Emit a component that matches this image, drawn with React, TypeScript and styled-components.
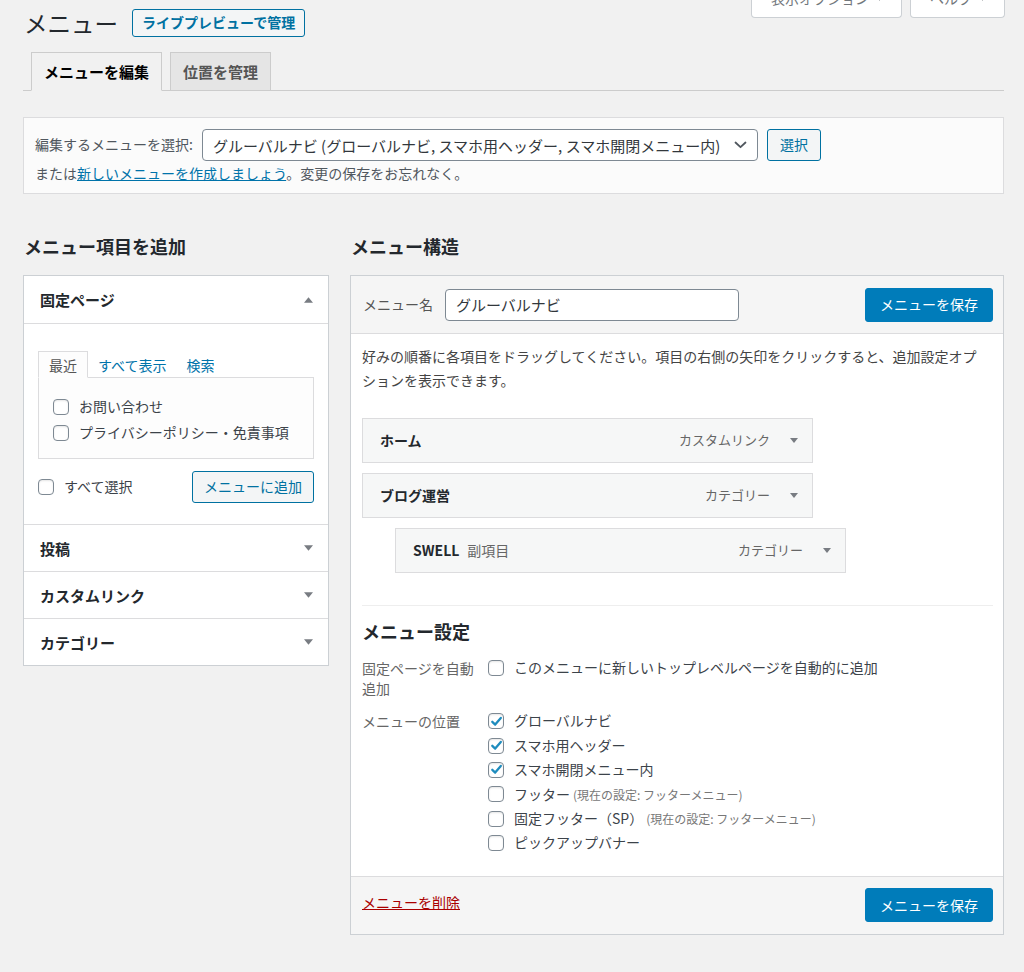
import React from "react";
import styled, { createGlobalStyle } from "styled-components";

const GlobalStyle = createGlobalStyle`
  html, body { margin: 0; padding: 0; background: #f1f1f1; }
  body {
    font-family: "Noto Sans CJK JP", "Noto Sans", sans-serif;
    color: #444;
    font-size: 14px;
    line-height: 1.4;
  }
  * { box-sizing: border-box; }
`;

const Page = styled.div`
  min-height: 972px;
  padding: 0 20px 40px 23px;
  overflow: hidden;
`;

const HeaderRow = styled.div`
  display: flex;
  align-items: center;
  height: 46px;
`;

const Title = styled.h1`
  margin: 0 14px 0 1px;
  font-size: 23.5px;
  font-weight: 400;
  line-height: 30px;
  color: #23282d;
`;

const OutlineButton = styled.span<{ $h?: number; $px?: number; $bold?: boolean }>`
  display: inline-flex;
  align-items: center;
  justify-content: center;
  height: ${(p) => p.$h ?? 32}px;
  padding: 0 ${(p) => p.$px ?? 11}px;
  border: 1px solid #0071a1;
  border-radius: 3px;
  background: #f3f5f6;
  color: #0071a1;
  font-size: 14px;
  font-weight: ${(p) => (p.$bold ? 600 : 400)};
  white-space: nowrap;
  flex: none;
`;

const PrimaryButton = styled.span`
  display: inline-flex;
  align-items: center;
  justify-content: center;
  height: 34px;
  padding: 0 14px;
  border: 1px solid #007cba;
  border-radius: 3px;
  background: #007cba;
  color: #fff;
  font-size: 14px;
  white-space: nowrap;
  flex: none;
`;

const MetaLinks = styled.div`
  margin-left: auto;
  align-self: flex-start;
  margin-top: -17px;
  margin-right: -1px;
  display: flex;
  gap: 8px;
`;

const MetaButton = styled.span`
  display: flex;
  align-items: flex-start;
  gap: 6px;
  height: 35px;
  padding: 5px 17px 0 19px;
  background: #fff;
  border: 1px solid #ccd0d4;
  border-top: none;
  border-radius: 0 0 4px 4px;
  color: #72777c;
  font-size: 14px;
  line-height: 20px;
  & > svg { margin-top: 7px; }
`;

const TabBar = styled.div`
  margin-top: 6px;
  display: flex;
  gap: 8px;
  padding-left: 8px;
  border-bottom: 1px solid #ccc;
`;

const Tab = styled.span<{ $active?: boolean }>`
  margin-bottom: -1px;
  padding: 5px 12px;
  font-size: 15px;
  font-weight: 600;
  line-height: 27px;
  border: 1px solid #ccc;
  border-bottom-color: ${(p) => (p.$active ? "#f1f1f1" : "#ccc")};
  background: ${(p) => (p.$active ? "#f1f1f1" : "#e5e5e5")};
  color: ${(p) => (p.$active ? "#000" : "#555")};
`;

const ManageBox = styled.div`
  margin-top: 26px;
  display: flex;
  flex-direction: column;
  padding: 11px 10px 10px 11px;
  background: #fbfbfb;
  border: 1px solid #dcdcde;
`;

const ManageRow = styled.div`
  display: flex;
  align-items: center;
  gap: 9px;
  height: 32px;
`;

const ManageLabel = styled.span`
  color: #50575e;
  font-size: 14px;
`;

const SelectBox = styled.div`
  width: 556px;
  height: 32px;
  display: flex;
  align-items: center;
  justify-content: space-between;
  padding: 0 10px 0 10px;
  border: 1px solid #7e8993;
  border-radius: 4px;
  background: #fff;
  color: #32373c;
  font-size: 15px;
  white-space: nowrap;
`;

const ManageNote = styled.div`
  margin-top: 2px;
  line-height: 20px;
  color: #50575e;
  font-size: 14px;
`;

const Link = styled.a<{ $danger?: boolean }>`
  color: ${(p) => (p.$danger ? "#a00" : "#0073aa")};
  text-decoration: underline;
  cursor: pointer;
`;

const Columns = styled.div`
  margin-top: 40px;
  display: flex;
  align-items: flex-start;
  gap: 21px;
`;

const LeftCol = styled.div`
  width: 306px;
  flex: none;
`;

const RightCol = styled.div`
  flex: 1;
  min-width: 0;
`;

const SectionHeading = styled.h2`
  margin: 0 0 16px 1px;
  font-size: 18px;
  font-weight: 700;
  line-height: 25px;
  color: #23282d;
`;

const Accordion = styled.div`
  border: 1px solid #ccd0d4;
  background: #fff;
`;

const AccSection = styled.div`
  & + & { border-top: 1px solid #dcdcde; }
`;

const AccHeader = styled.div<{ $open?: boolean }>`
  height: ${(p) => (p.$open ? 48 : 46)}px;
  display: flex;
  align-items: center;
  justify-content: space-between;
  padding: 0 15px 0 16px;
  font-size: 15px;
  font-weight: 700;
  color: #23282d;
  border-bottom: ${(p) => (p.$open ? "1px solid #dcdcde" : "none")};
`;

const AccBody = styled.div`
  padding: 27px 14px 21px 14px;
`;

const MiniTabs = styled.div`
  display: flex;
  align-items: flex-end;
  height: 27px;
  position: relative;
  z-index: 1;
`;

const MiniTab = styled.span<{ $active?: boolean }>`
  padding: 0 ${(p) => (p.$active ? 10 : 9)}px;
  height: 27px;
  line-height: 26px;
  font-size: 14px;
  border: 1px solid ${(p) => (p.$active ? "#dcdcde" : "transparent")};
  border-bottom: 1px solid ${(p) => (p.$active ? "#fdfdfd" : "transparent")};
  background: ${(p) => (p.$active ? "#fdfdfd" : "transparent")};
  color: ${(p) => (p.$active ? "#555" : "#0073aa")};
`;

const TabPanel = styled.div`
  margin-top: -1px;
  border: 1px solid #dcdcde;
  background: #fdfdfd;
  padding: 16px 14px 12px;
`;

const CheckRow = styled.label<{ $h?: number }>`
  display: flex;
  align-items: center;
  gap: 10px;
  height: ${(p) => p.$h ?? 26}px;
  font-size: 14px;
  color: #3c434a;
  white-space: nowrap;
`;

const Actions = styled.div`
  margin-top: 12px;
  display: flex;
  align-items: center;
  justify-content: space-between;
  height: 32px;
`;

const Box = styled.span`
  width: 16px;
  height: 16px;
  flex: none;
  display: inline-flex;
  align-items: center;
  justify-content: center;
  border: 1px solid #7e8993;
  border-radius: 4px;
  background: #fff;
  box-shadow: inset 0 1px 2px rgba(0, 0, 0, 0.1);
`;

const Panel = styled.div`
  border: 1px solid #ccd0d4;
  background: #fff;
`;

const PanelHeader = styled.div`
  height: 58px;
  display: flex;
  align-items: center;
  padding: 0 10px 0 12px;
  background: #f5f5f5;
  border-bottom: 1px solid #dcdcde;
`;

const FieldLabel = styled.span`
  color: #555;
  font-size: 14px;
  margin-right: 12px;
`;

const NameInput = styled.input`
  width: 294px;
  height: 32px;
  padding: 0 10px;
  border: 1px solid #7e8993;
  border-radius: 4px;
  background: #fff;
  font-family: inherit;
  font-size: 15px;
  color: #32373c;
  outline: none;
  margin-right: auto;
`;

const PanelBody = styled.div`
  padding: 10px 10px 21px 11px;
`;

const Instructions = styled.p`
  margin: 0;
  padding-right: 8px;
  font-size: 14px;
  line-height: 24px;
  color: #444;
`;

const MenuList = styled.div`
  margin-top: 26px;
  display: flex;
  flex-direction: column;
  gap: 10px;
`;

const MenuItem = styled.div<{ $depth?: number }>`
  width: 451px;
  height: 45px;
  margin-left: ${(p) => (p.$depth ?? 0) * 33}px;
  display: flex;
  align-items: center;
  padding: 0 14px 0 17px;
  border: 1px solid #dcdcde;
  background: #f6f7f7;
`;

const ItemTitle = styled.span`
  font-size: 14px;
  font-weight: 700;
  color: #23282d;
`;

const ItemSub = styled.span`
  margin-left: 8px;
  font-size: 14px;
  color: #666;
`;

const ItemType = styled.span`
  margin-left: auto;
  margin-right: 20px;
  font-size: 13px;
  color: #666;
`;

const Settings = styled.div`
  margin-top: 32px;
  border-top: 1px solid #eee;
  padding-top: 13px;
`;

const SettingsHeading = styled.h3`
  margin: 0;
  font-size: 18px;
  font-weight: 700;
  line-height: 25px;
  color: #23282d;
`;

const SettingRow = styled.div<{ $gap: number }>`
  margin-top: ${(p) => p.$gap}px;
  display: flex;
  align-items: flex-start;
`;

const SettingLabel = styled.div<{ $lh: number }>`
  width: 118px;
  margin-right: 8px;
  flex: none;
  font-size: 14px;
  line-height: ${(p) => p.$lh}px;
  color: #666;
`;

const OptionList = styled.div`
  display: flex;
  flex-direction: column;
`;

const Hint = styled.span`
  margin-left: 3px;
  font-size: 12px;
  color: #777;
`;

const PanelFooter = styled.div`
  display: flex;
  align-items: flex-start;
  justify-content: space-between;
  padding: 11px 10px 12px 11px;
  background: #f5f5f5;
  border-top: 1px solid #dcdcde;
`;

const DeleteLink = styled(Link)`
  font-size: 14px;
  line-height: 28px;
`;

const Triangle = ({ up = false, w = 9, color = "#787c82" }: { up?: boolean; w?: number; color?: string }) => (
  <svg width={w} height={Math.round(w * 0.62)} viewBox="0 0 10 6" aria-hidden="true">
    <polygon points={up ? "0,6 10,6 5,0" : "0,0 10,0 5,6"} fill={color} />
  </svg>
);

const Chevron = () => (
  <svg width="13" height="8" viewBox="0 0 13 8" aria-hidden="true">
    <path d="M1.5 1.5 L6.5 6.2 L11.5 1.5" fill="none" stroke="#50575e" strokeWidth="1.8" strokeLinecap="round" strokeLinejoin="round" />
  </svg>
);

const CheckBox = ({ checked = false }: { checked?: boolean }) => (
  <Box>
    {checked && (
      <svg width="13" height="13" viewBox="0 0 13 13" aria-hidden="true">
        <path d="M2.3 6.8 L5.2 9.6 L10.8 3" fill="none" stroke="#1e8cbe" strokeWidth="2.3" strokeLinecap="round" strokeLinejoin="round" />
      </svg>
    )}
  </Box>
);

const menuItems = [
  { title: "ホーム", type: "カスタムリンク", depth: 0 },
  { title: "ブログ運営", type: "カテゴリー", depth: 0 },
  { title: "SWELL", sub: "副項目", type: "カテゴリー", depth: 1 },
];

const locations: { label: string; checked: boolean; hint?: string }[] = [
  { label: "グローバルナビ", checked: true },
  { label: "スマホ用ヘッダー", checked: true },
  { label: "スマホ開閉メニュー内", checked: true },
  { label: "フッター", checked: false, hint: "(現在の設定: フッターメニュー)" },
  { label: "固定フッター（SP）", checked: false, hint: "(現在の設定: フッターメニュー)" },
  { label: "ピックアップバナー", checked: false },
];

export default function App() {
  return (
    <>
      <GlobalStyle />
      <Page>
        <HeaderRow>
          <Title>メニュー</Title>
          <OutlineButton $h={28} $px={9} $bold>
            ライブプレビューで管理
          </OutlineButton>
          <MetaLinks>
            <MetaButton>
              表示オプション <Triangle w={9} color="#72777c" />
            </MetaButton>
            <MetaButton>
              ヘルプ <Triangle w={9} color="#72777c" />
            </MetaButton>
          </MetaLinks>
        </HeaderRow>

        <TabBar>
          <Tab $active>メニューを編集</Tab>
          <Tab>位置を管理</Tab>
        </TabBar>

        <ManageBox>
          <ManageRow>
            <ManageLabel>編集するメニューを選択:</ManageLabel>
            <SelectBox>
              <span>グルーバルナビ (グローバルナビ, スマホ用ヘッダー, スマホ開閉メニュー内)</span>
              <Chevron />
            </SelectBox>
            <OutlineButton $px={12}>選択</OutlineButton>
          </ManageRow>
          <ManageNote>
            または<Link>新しいメニューを作成しましょう</Link>。変更の保存をお忘れなく。
          </ManageNote>
        </ManageBox>

        <Columns>
          <LeftCol>
            <SectionHeading>メニュー項目を追加</SectionHeading>
            <Accordion>
              <AccSection>
                <AccHeader $open>
                  固定ページ
                  <Triangle up />
                </AccHeader>
                <AccBody>
                  <MiniTabs>
                    <MiniTab $active>最近</MiniTab>
                    <MiniTab>すべて表示</MiniTab>
                    <MiniTab>検索</MiniTab>
                  </MiniTabs>
                  <TabPanel>
                    <CheckRow>
                      <CheckBox />
                      お問い合わせ
                    </CheckRow>
                    <CheckRow>
                      <CheckBox />
                      プライバシーポリシー・免責事項
                    </CheckRow>
                  </TabPanel>
                  <Actions>
                    <CheckRow>
                      <CheckBox />
                      すべて選択
                    </CheckRow>
                    <OutlineButton $px={11}>メニューに追加</OutlineButton>
                  </Actions>
                </AccBody>
              </AccSection>
              {["投稿", "カスタムリンク", "カテゴリー"].map((t) => (
                <AccSection key={t}>
                  <AccHeader>
                    {t}
                    <Triangle />
                  </AccHeader>
                </AccSection>
              ))}
            </Accordion>
          </LeftCol>

          <RightCol>
            <SectionHeading>メニュー構造</SectionHeading>
            <Panel>
              <PanelHeader>
                <FieldLabel>メニュー名</FieldLabel>
                <NameInput readOnly value="グルーバルナビ" />
                <PrimaryButton>メニューを保存</PrimaryButton>
              </PanelHeader>
              <PanelBody>
                <Instructions>
                  好みの順番に各項目をドラッグしてください。項目の右側の矢印をクリックすると、追加設定オプションを表示できます。
                </Instructions>
                <MenuList>
                  {menuItems.map((m) => (
                    <MenuItem key={m.title} $depth={m.depth}>
                      <ItemTitle>{m.title}</ItemTitle>
                      {m.sub && <ItemSub>{m.sub}</ItemSub>}
                      <ItemType>{m.type}</ItemType>
                      <Triangle w={8} />
                    </MenuItem>
                  ))}
                </MenuList>
                <Settings>
                  <SettingsHeading>メニュー設定</SettingsHeading>
                  <SettingRow $gap={14}>
                    <SettingLabel $lh={20}>固定ページを自動追加</SettingLabel>
                    <CheckRow $h={20}>
                      <CheckBox />
                      このメニューに新しいトップレベルページを自動的に追加
                    </CheckRow>
                  </SettingRow>
                  <SettingRow $gap={11}>
                    <SettingLabel $lh={24}>メニューの位置</SettingLabel>
                    <OptionList>
                      {locations.map((l) => (
                        <CheckRow key={l.label} $h={24.4}>
                          <CheckBox checked={l.checked} />
                          <span>
                            {l.label}
                            {l.hint && <Hint>{l.hint}</Hint>}
                          </span>
                        </CheckRow>
                      ))}
                    </OptionList>
                  </SettingRow>
                </Settings>
              </PanelBody>
              <PanelFooter>
                <DeleteLink $danger>メニューを削除</DeleteLink>
                <PrimaryButton>メニューを保存</PrimaryButton>
              </PanelFooter>
            </Panel>
          </RightCol>
        </Columns>
      </Page>
    </>
  );
}
